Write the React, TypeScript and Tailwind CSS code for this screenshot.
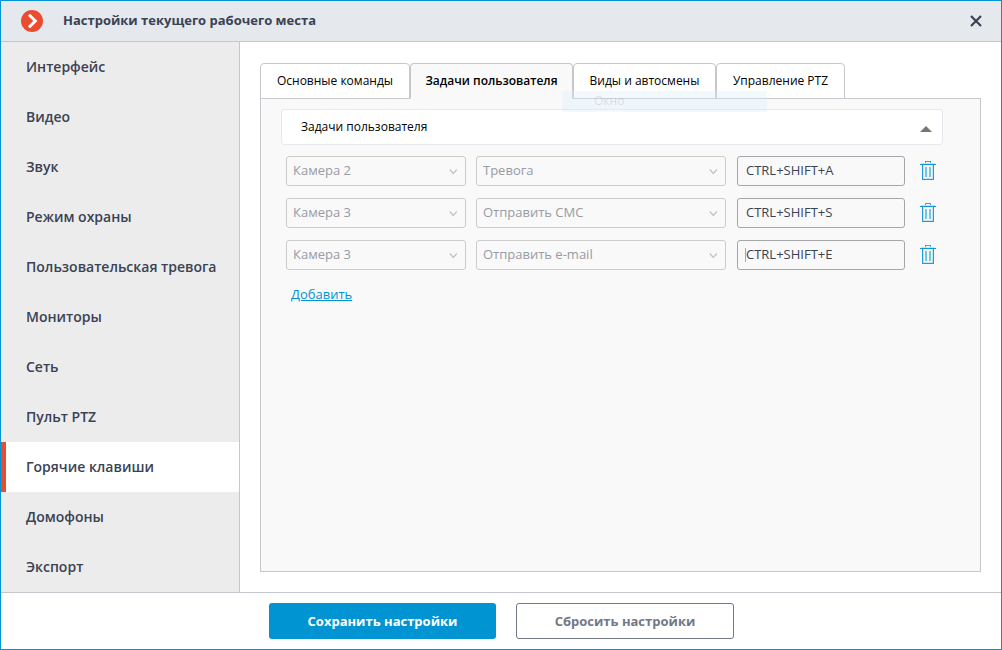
import { useState } from "react";

const menu = [
    "Интерфейс",
    "Видео",
    "Звук",
    "Режим охраны",
    "Пользовательская тревога",
    "Мониторы",
    "Сеть",
    "Пульт PTZ",
    "Горячие клавиши",
    "Домофоны",
    "Экспорт",
];

const tabs = [
    { name: "Основные команды", width: "w-[150px]" },
    { name: "Задачи пользователя", width: "w-[163px]" },
    { name: "Виды и автосмены", width: "w-[143px]" },
    { name: "Управление PTZ", width: "w-[129px]" },
];

const tasks = [
    { camera: "Камера 2", action: "Тревога", keys: "CTRL+SHIFT+A" },
    { camera: "Камера 3", action: "Отправить СМС", keys: "CTRL+SHIFT+S" },
    { camera: "Камера 3", action: "Отправить e-mail", keys: "CTRL+SHIFT+E" },
];

interface SelectProps {
    label: string;
    value: string;
    className: string;
}

function Select({ label, value, className }: SelectProps) {
    return (
        <div className={`relative ${className}`}>
            <select
                aria-label={label}
                disabled
                defaultValue={value}
                className="block h-[30px] w-full appearance-none rounded-[3px] border border-[#cccccc] bg-[#f9f9f9] pl-1.5 pr-6 text-[13px] text-[#979ba5] opacity-100"
            >
                <option>{value}</option>
            </select>
            <svg className="pointer-events-none absolute right-2 top-3 h-2 w-[9px]" viewBox="0 0 9 8" fill="none" stroke="#c3c3c3" strokeWidth="1.3">
                <path d="M.8 1.5 4.3 5.5 7.8 1.5" />
            </svg>
        </div>
    );
}

function Trash() {
    return (
        <svg width="16" height="20" viewBox="0 0 16 20" fill="none" shapeRendering="crispEdges">
            <path d="M3.5 4v13.5h9V4" stroke="#bfe4f4" />
            <path d="M5.5 3V.5h5V3" stroke="#37a9dc" />
            <path d="M0 3.5h16" stroke="#0f98d5" />
            <path d="M1 2.5h14" stroke="#bfe4f4" />
            <path d="M2.5 4v14.5h11V4" stroke="#1c9ed8" />
            <path d="M6 6v10M10 6v10" stroke="#74c3e6" strokeWidth="2" />
        </svg>
    );
}

export default function App() {
    const [page, setPage] = useState("Горячие клавиши");
    const [tab, setTab] = useState("Задачи пользователя");
    const [open, setOpen] = useState(true);

    return (
        <div className="flex min-h-screen flex-col border border-[#0094d3] bg-white font-['Open_Sans','Noto_Sans',sans-serif] text-[13px] text-[#3a4254]">
            <header className="flex h-[41px] items-center border-b border-[#c6c7cd] bg-[#e5e8ed] pl-5 pr-[19px]">
                <svg width="22" height="22" viewBox="0 0 22 22" fill="none">
                    <circle cx="11" cy="11" r="11" fill="#ea4c2f" />
                    <path d="M8 4.8 14.3 11 8 17.2" stroke="#fff" strokeWidth="3" />
                </svg>
                <h1 className="ml-5 flex-1 text-[13px] font-bold">Настройки текущего рабочего места</h1>
                <button aria-label="Закрыть" className="cursor-pointer">
                    <svg width="12" height="12" viewBox="0 0 12 12" stroke="#3a4254" strokeWidth="2.2">
                        <path d="M1 1l10 10M11 1 1 11" />
                    </svg>
                </button>
            </header>

            <div className="flex flex-1">
                <nav className="flex w-[239px] shrink-0 flex-col border-r border-[#c6c7cd] bg-[#ececec]">
                    {menu.map((item) => (
                        <button
                            key={item}
                            onClick={() => setPage(item)}
                            className={`h-[50px] cursor-pointer border-l-[5px] pl-5 text-left text-sm font-semibold ${
                                item === page ? "border-[#ea4c2f] bg-white" : "border-transparent"
                            }`}
                        >
                            {item}
                        </button>
                    ))}
                </nav>

                <main className="flex flex-1 flex-col px-5 pb-5 pt-[21px]">
                    <div className="relative z-10 flex text-xs text-black">
                        {tabs.map((t) => (
                            <button
                                key={t.name}
                                onClick={() => setTab(t.name)}
                                className={`h-9 cursor-pointer rounded-t border border-[#c6c7cd] ${t.width} ${
                                    t.name === tab ? "border-b-[#f9f9f9] bg-[#f9f9f9] font-semibold" : "bg-white"
                                }`}
                            >
                                {t.name}
                            </button>
                        ))}
                        <div className="pointer-events-none absolute left-[302px] top-7 h-[21px] w-[205px] bg-[#d6efff]/30 pl-8 text-xs leading-5 text-[#8a8a8a]/25">
                            Окно
                        </div>
                    </div>

                    <section className="-mt-px flex-1 border border-[#c6c7cd] bg-[#f9f9f9] px-5 pt-2.5">
                        <button
                            onClick={() => setOpen(!open)}
                            className="flex h-9 w-[calc(100%-17px)] cursor-pointer items-center justify-between rounded-[3px] border border-[#e5e8ed] bg-white pl-[19px] pr-2.5 text-xs text-black"
                        >
                            Задачи пользователя
                            <svg width="12" height="6" viewBox="0 0 12 6" className="mt-1">
                                <path d="M6 0 12 6H0z" fill="#7a7575" />
                            </svg>
                        </button>
                        {open && (
                            <div className="pl-[5px] pt-[11px]">
                                <div className="flex flex-col gap-3">
                                    {tasks.map((task, i) => (
                                        <div key={task.keys} className="flex items-center">
                                            <Select label="Камера" value={task.camera} className="w-[180px]" />
                                            <Select label="Задача" value={task.action} className="ml-2.5 w-[250px]" />
                                            <div className="relative ml-[11px] w-[168px]">
                                                <input
                                                    aria-label="Горячая клавиша"
                                                    defaultValue={task.keys}
                                                    className="block h-[30px] w-full rounded-[3px] border border-[#a5a6a9] bg-[#f9f9f9] px-2 pb-0.5 text-[13px] text-[#3a4254] outline-none"
                                                />
                                                {i === tasks.length - 1 && <span className="absolute left-2 top-2 h-3.5 w-px bg-[#a5a6a9]" />}
                                            </div>
                                            <button aria-label="Удалить" className="ml-[15px] cursor-pointer">
                                                <Trash />
                                            </button>
                                        </div>
                                    ))}
                                </div>
                                <a href="#add" className="ml-[5px] mt-[15px] inline-block text-[#0094d3] underline">
                                    Добавить
                                </a>
                            </div>
                        )}
                    </section>
                </main>
            </div>

            <footer className="flex gap-5 border-t border-[#c6c7cd] py-2.5 pl-[268px] text-[13px] font-bold">
                <button className="h-9 w-[227px] cursor-pointer rounded-[3px] bg-[#0094d3] pt-0.5 text-white">Сохранить настройки</button>
                <button className="h-9 w-[218px] cursor-pointer rounded-[3px] border border-[#727887] pt-0.5 text-[#727887]">Сбросить настройки</button>
            </footer>
        </div>
    );
}
